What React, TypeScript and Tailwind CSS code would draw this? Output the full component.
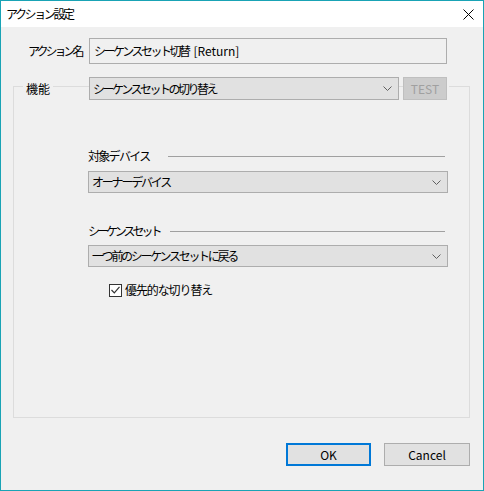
import React from 'react';

const font = { fontFamily: '"Noto Sans CJK JP", "Noto Sans", sans-serif' };

function Chevron() {
  return (
    <svg width="9" height="5" viewBox="0 0 9 5" className="shrink-0">
      <polyline points="0.5,0.5 4.5,4.5 8.5,0.5" fill="none" stroke="#606060" strokeWidth="1" />
    </svg>
  );
}

function Select({ value, className = '' }: { value: string; className?: string }) {
  return (
    <div
      className={`flex h-[22px] items-center justify-between border border-[#adadad] bg-[#e1e1e1] pl-[3px] pr-[6px] ${className}`}
    >
      <span className="whitespace-nowrap leading-none">{value}</span>
      <Chevron />
    </div>
  );
}

function Heading({ label, width, tracking }: { label: string; width: string; tracking: string }) {
  return (
    <div className="flex h-[16px] items-center">
      <span className={`${width} ${tracking} shrink-0 whitespace-nowrap leading-none`}>{label}</span>
      <div className="mr-[3px] h-px flex-1 bg-[#a0a0a0]" />
    </div>
  );
}

export default function App() {
  return (
    <div
      className="flex h-[491px] w-[484px] flex-col border border-[#19a3b5] bg-[#f0f0f0] text-[12px] tracking-[-2.4px] text-black"
      style={font}
    >
      {/* Title bar */}
      <div className="flex h-[26px] shrink-0 items-center justify-between bg-white pl-[5px] pr-[9px]">
        <span className="leading-none">アクション設定</span>
        <svg width="11" height="11" viewBox="0 0 11 11">
          <path d="M0.5 0.5 L10.5 10.5 M10.5 0.5 L0.5 10.5" stroke="#000" strokeWidth="1" />
        </svg>
      </div>

      <div className="flex flex-1 flex-col pl-[12px] pr-[13px]">
        {/* Action name */}
        <div className="mt-[11px] flex items-center">
          <span className="w-[76px] shrink-0 whitespace-nowrap pl-[15px] leading-none tracking-[-3px]">アクション名</span>
          <div className="flex h-[26px] w-[358px] items-center border border-[#adadad] bg-[#f0f0f0] pl-[4px]">
            <span className="whitespace-nowrap leading-none tracking-[-2.5px]">シーケンスセット切替</span>
            <span className="ml-[5px] whitespace-nowrap leading-none tracking-normal">[Return]</span>
          </div>
        </div>

        {/* Function group */}
        <div className="mt-[22px] flex h-[332px] flex-col border border-[#dcdcdc]">
          <div className="-mt-[10px] flex h-[23px] items-stretch">
            <div className="flex w-[75px] shrink-0 items-center">
              <span className="ml-[9px] bg-[#f0f0f0] px-[3px] leading-none tracking-normal">機能</span>
            </div>
            <Select value="シーケンスセットの切り替え" className="h-[23px] w-[310px] tracking-[-2.5px]" />
            <div className="ml-[4px] flex w-[44px] items-center justify-center border border-[#bfbfbf] bg-[#cccccc] tracking-normal text-[#a0a0a0]">
              TEST
            </div>
            <div className="w-[2px] bg-[#f0f0f0]" />
          </div>

          <div className="flex flex-col pl-[74px] pr-[21px]">
            <div className="mt-[48px]">
              <Heading label="対象デバイス" width="w-[80px]" tracking="tracking-[-1.7px]" />
            </div>
            <Select value="オーナーデバイス" className="mt-[7px] tracking-[-2.2px]" />

            <div className="mt-[30px]">
              <Heading label="シーケンスセット" width="w-[82px]" tracking="tracking-[-3px]" />
            </div>
            <Select value="一つ前のシーケンスセットに戻る" className="mt-[6px] tracking-[-2.3px]" />

            <div className="mt-[16px] flex h-[14px] items-center pl-[21px]">
              <div className="flex h-[13px] w-[13px] items-center justify-center border border-[#333333] bg-white">
                <svg width="9" height="8" viewBox="0 0 9 8">
                  <polyline points="0.5,4 3.3,6.8 8.5,0.8" fill="none" stroke="#333" strokeWidth="1.2" />
                </svg>
              </div>
              <span className="ml-[3px] whitespace-nowrap leading-none tracking-[-1.1px]">優先的な切り替え</span>
            </div>
          </div>
        </div>

        {/* Buttons */}
        <div className="mt-[25px] flex justify-end gap-[13px] tracking-normal">
          <div className="flex h-[23px] w-[85px] items-center justify-center border-2 border-[#0078d7] bg-[#e1e1e1]">
            OK
          </div>
          <div className="flex h-[23px] w-[86px] items-center justify-center border border-[#adadad] bg-[#e1e1e1]">
            Cancel
          </div>
        </div>
      </div>
    </div>
  );
}
